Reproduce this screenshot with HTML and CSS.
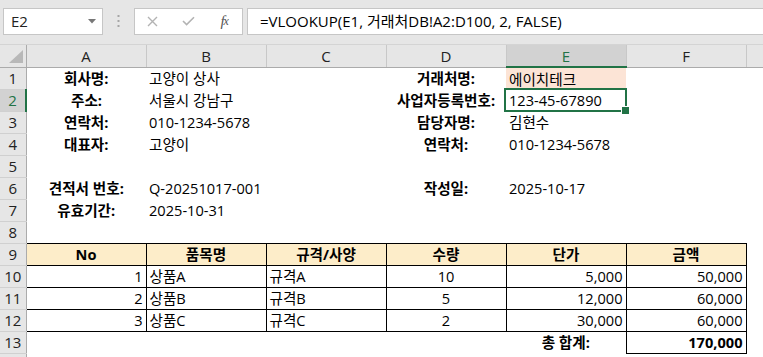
FILE: index.html
```html
<!DOCTYPE html>
<html lang="ko">
<head>
  <meta charset="UTF-8" />
  <title>견적서</title>
  <link rel="stylesheet" href="styles.css">
</head>
<body>
  <div class="toolbar">
    <div class="namebox">
      <span>E2</span>
      <svg class="drop" width="8" height="5" viewBox="0 0 8 5"><polygon points="0,0 8,0 4,4.5" fill="#777"/></svg>
    </div>
    <div class="grip">
      <svg width="3" height="13" viewBox="0 0 3 13"><rect x="0.5" y="0" width="2" height="2" fill="#a6a6a6"/><rect x="0.5" y="5" width="2" height="2" fill="#a6a6a6"/><rect x="0.5" y="10" width="2" height="2" fill="#a6a6a6"/></svg>
    </div>
    <div class="buttons">
      <span class="btn">
        <svg width="11" height="11" viewBox="0 0 11 11"><path d="M1 1 L10 10 M10 1 L1 10" stroke="#b3b3b3" stroke-width="1.4"/></svg>
      </span>
      <span class="btn">
        <svg width="13" height="10" viewBox="0 0 13 10"><path d="M1 5 L4.6 8.6 L12 1.2" stroke="#b3b3b3" stroke-width="1.6" fill="none"/></svg>
      </span>
      <span class="btn fx">f<span class="x">x</span></span>
    </div>
    <div class="formula">=VLOOKUP(E1, 거래처DB!A2:D100, 2, FALSE)</div>
  </div>

  <table class="sheet">
    <colgroup>
      <col class="c-head">
      <col class="c-col"><col class="c-col"><col class="c-col">
      <col class="c-col"><col class="c-col"><col class="c-col">
      <col class="c-rest">
    </colgroup>
    <thead>
      <tr>
        <th class="corner"><svg width="14" height="13" viewBox="0 0 14 13"><polygon points="14,0 14,13 0,13" fill="#b8b8b8"/></svg></th>
        <th>A</th><th>B</th><th>C</th><th>D</th><th class="on">E</th><th>F</th><th class="rest"></th>
      </tr>
    </thead>
    <tbody>
      <tr>
        <th class="rh">1</th>
        <td class="lbl">회사명:</td><td class="val">고양이 상사</td><td></td>
        <td class="lbl">거래처명:</td><td class="val peach">에이치테크</td><td></td><td></td>
      </tr>
      <tr>
        <th class="rh on">2</th>
        <td class="lbl">주소:</td><td class="val">서울시 강남구</td><td></td>
        <td class="lbl">사업자등록번호:</td><td class="val active">123-45-67890</td><td></td><td></td>
      </tr>
      <tr>
        <th class="rh">3</th>
        <td class="lbl">연락처:</td><td class="val">010-1234-5678</td><td></td>
        <td class="lbl">담당자명:</td><td class="val">김현수</td><td></td><td></td>
      </tr>
      <tr>
        <th class="rh">4</th>
        <td class="lbl">대표자:</td><td class="val">고양이</td><td></td>
        <td class="lbl">연락처:</td><td class="val">010-1234-5678</td><td></td><td></td>
      </tr>
      <tr>
        <th class="rh">5</th>
        <td></td><td></td><td></td><td></td><td></td><td></td><td></td>
      </tr>
      <tr>
        <th class="rh">6</th>
        <td class="lbl">견적서 번호:</td><td class="val">Q-20251017-001</td><td></td>
        <td class="lbl">작성일:</td><td class="val">2025-10-17</td><td></td><td></td>
      </tr>
      <tr>
        <th class="rh">7</th>
        <td class="lbl">유효기간:</td><td class="val">2025-10-31</td><td></td>
        <td></td><td></td><td></td><td></td>
      </tr>
      <tr>
        <th class="rh">8</th>
        <td></td><td></td><td></td><td></td><td></td><td></td><td></td>
      </tr>
      <tr>
        <th class="rh">9</th>
        <td class="th">No</td><td class="th">품목명</td><td class="th">규격/사양</td>
        <td class="th">수량</td><td class="th">단가</td><td class="th">금액</td><td></td>
      </tr>
      <tr>
        <th class="rh">10</th>
        <td class="b num">1</td><td class="b">상품A</td><td class="b">규격A</td>
        <td class="b mid">10</td><td class="b num">5,000</td><td class="b num">50,000</td><td></td>
      </tr>
      <tr>
        <th class="rh">11</th>
        <td class="b num">2</td><td class="b">상품B</td><td class="b">규격B</td>
        <td class="b mid">5</td><td class="b num">12,000</td><td class="b num">60,000</td><td></td>
      </tr>
      <tr>
        <th class="rh">12</th>
        <td class="b num">3</td><td class="b">상품C</td><td class="b">규격C</td>
        <td class="b mid">2</td><td class="b num">30,000</td><td class="b num">60,000</td><td></td>
      </tr>
      <tr>
        <th class="rh">13</th>
        <td></td><td></td><td></td><td></td>
        <td class="lbl">총 합계:</td><td class="b num strong">170,000</td><td></td>
      </tr>
      <tr>
        <th class="rh"></th>
        <td></td><td></td><td></td><td></td><td></td><td></td><td></td>
      </tr>
    </tbody>
  </table>
</body>
</html>
```

FILE: styles.css
```css
:root {
  --barra: #e6e6e6;
  --linea: #c6c6c6;
  --verde: #217346;
  --cabecera: #fdedc9;
  --durazno: #fce4d6;
}

* {
  box-sizing: border-box;
}

body {
  margin: 0;
  width: 763px;
  height: 357px;
  overflow: hidden;
  background: #fff;
  color: #000;
  font-family: "Open Sans", "Noto Sans CJK KR", sans-serif;
  font-size: 14.6px;
}

/* barra de fórmulas */
.toolbar {
  display: flex;
  align-items: center;
  height: 45px;
  padding: 0 0 2px 3px;
  background: var(--barra);
  border-bottom: 1px solid #d4d4d4;
  overflow: hidden;
}

.namebox,
.buttons,
.formula {
  height: 27px;
  background: #fff;
  border: 1px solid var(--linea);
}

.namebox {
  width: 100px;
  display: flex;
  align-items: center;
  justify-content: space-between;
  padding: 0 6px 0 7px;
  font-size: 15px;
  color: #222;
}

.grip {
  width: 31px;
  display: flex;
  justify-content: center;
}

.buttons {
  width: 109px;
  display: flex;
  align-items: center;
}

.btn {
  width: 36px;
  display: flex;
  justify-content: center;
  align-items: center;
}

.fx {
  font-family: "Liberation Serif", serif;
  font-style: italic;
  font-size: 15px;
  color: #555;
  letter-spacing: -1px;
}

.fx .x {
  font-size: 12px;
}

.formula {
  flex: 1;
  margin-left: 4px;
  margin-right: -2px;
  padding-left: 12px;
  line-height: 25px;
  font-size: 15px;
  white-space: nowrap;
}

/* hoja */
.sheet {
  border-collapse: collapse;
  table-layout: fixed;
  width: 763px;
}

.c-head { width: 26px; }
.c-col { width: 120px; }
.c-rest { width: 17px; }

.sheet tr {
  height: 22px;
}

.sheet thead th {
  height: 22px;
  padding: 0;
  background: var(--barra);
  border-right: 1px solid #c8c8c8;
  border-bottom: 1px solid #ababab;
  font-weight: normal;
  font-size: 15px;
  color: #222;
}

.sheet thead th.corner {
  border-right: 1px solid #ababab;
  text-align: right;
  vertical-align: bottom;
  padding: 0 3px 4px 0;
  line-height: 0;
}

.sheet thead th.on {
  background: #d2d2d2;
  color: var(--verde);
  border-bottom: 2px solid var(--verde);
}

.sheet thead th.rest {
  border-right: none;
}

.rh {
  padding: 0;
  background: var(--barra);
  border-right: 1px solid #ababab;
  border-bottom: 1px solid #d0d0d0;
  font-weight: normal;
  font-size: 15px;
  color: #222;
  text-align: center;
}

.rh.on {
  background: #d2d2d2;
  color: var(--verde);
  border-right: 2px solid var(--verde);
}

.sheet td {
  height: 22px;
  padding: 0 3px;
  line-height: 20px;
  white-space: nowrap;
  overflow: visible;
}

.lbl {
  text-align: center;
  font-weight: bold;
}

.val {
  text-align: left;
}

.peach {
  background: var(--durazno);
}

.active {
  position: relative;
}

.active::after {
  content: "";
  position: absolute;
  top: -1px;
  left: -2px;
  right: -1px;
  bottom: -1px;
  border: 2px solid var(--verde);
}

.active::before {
  content: "";
  position: absolute;
  right: -4px;
  bottom: -4px;
  width: 7px;
  height: 7px;
  background: var(--verde);
  border: 1px solid #fff;
  z-index: 1;
}

.th {
  background: var(--cabecera);
  border: 1px solid #000;
  text-align: center;
  font-weight: bold;
}

.b {
  border: 1px solid #000;
}

.num {
  text-align: right;
}

.mid {
  text-align: center;
}

.strong {
  font-weight: bold;
}
```
